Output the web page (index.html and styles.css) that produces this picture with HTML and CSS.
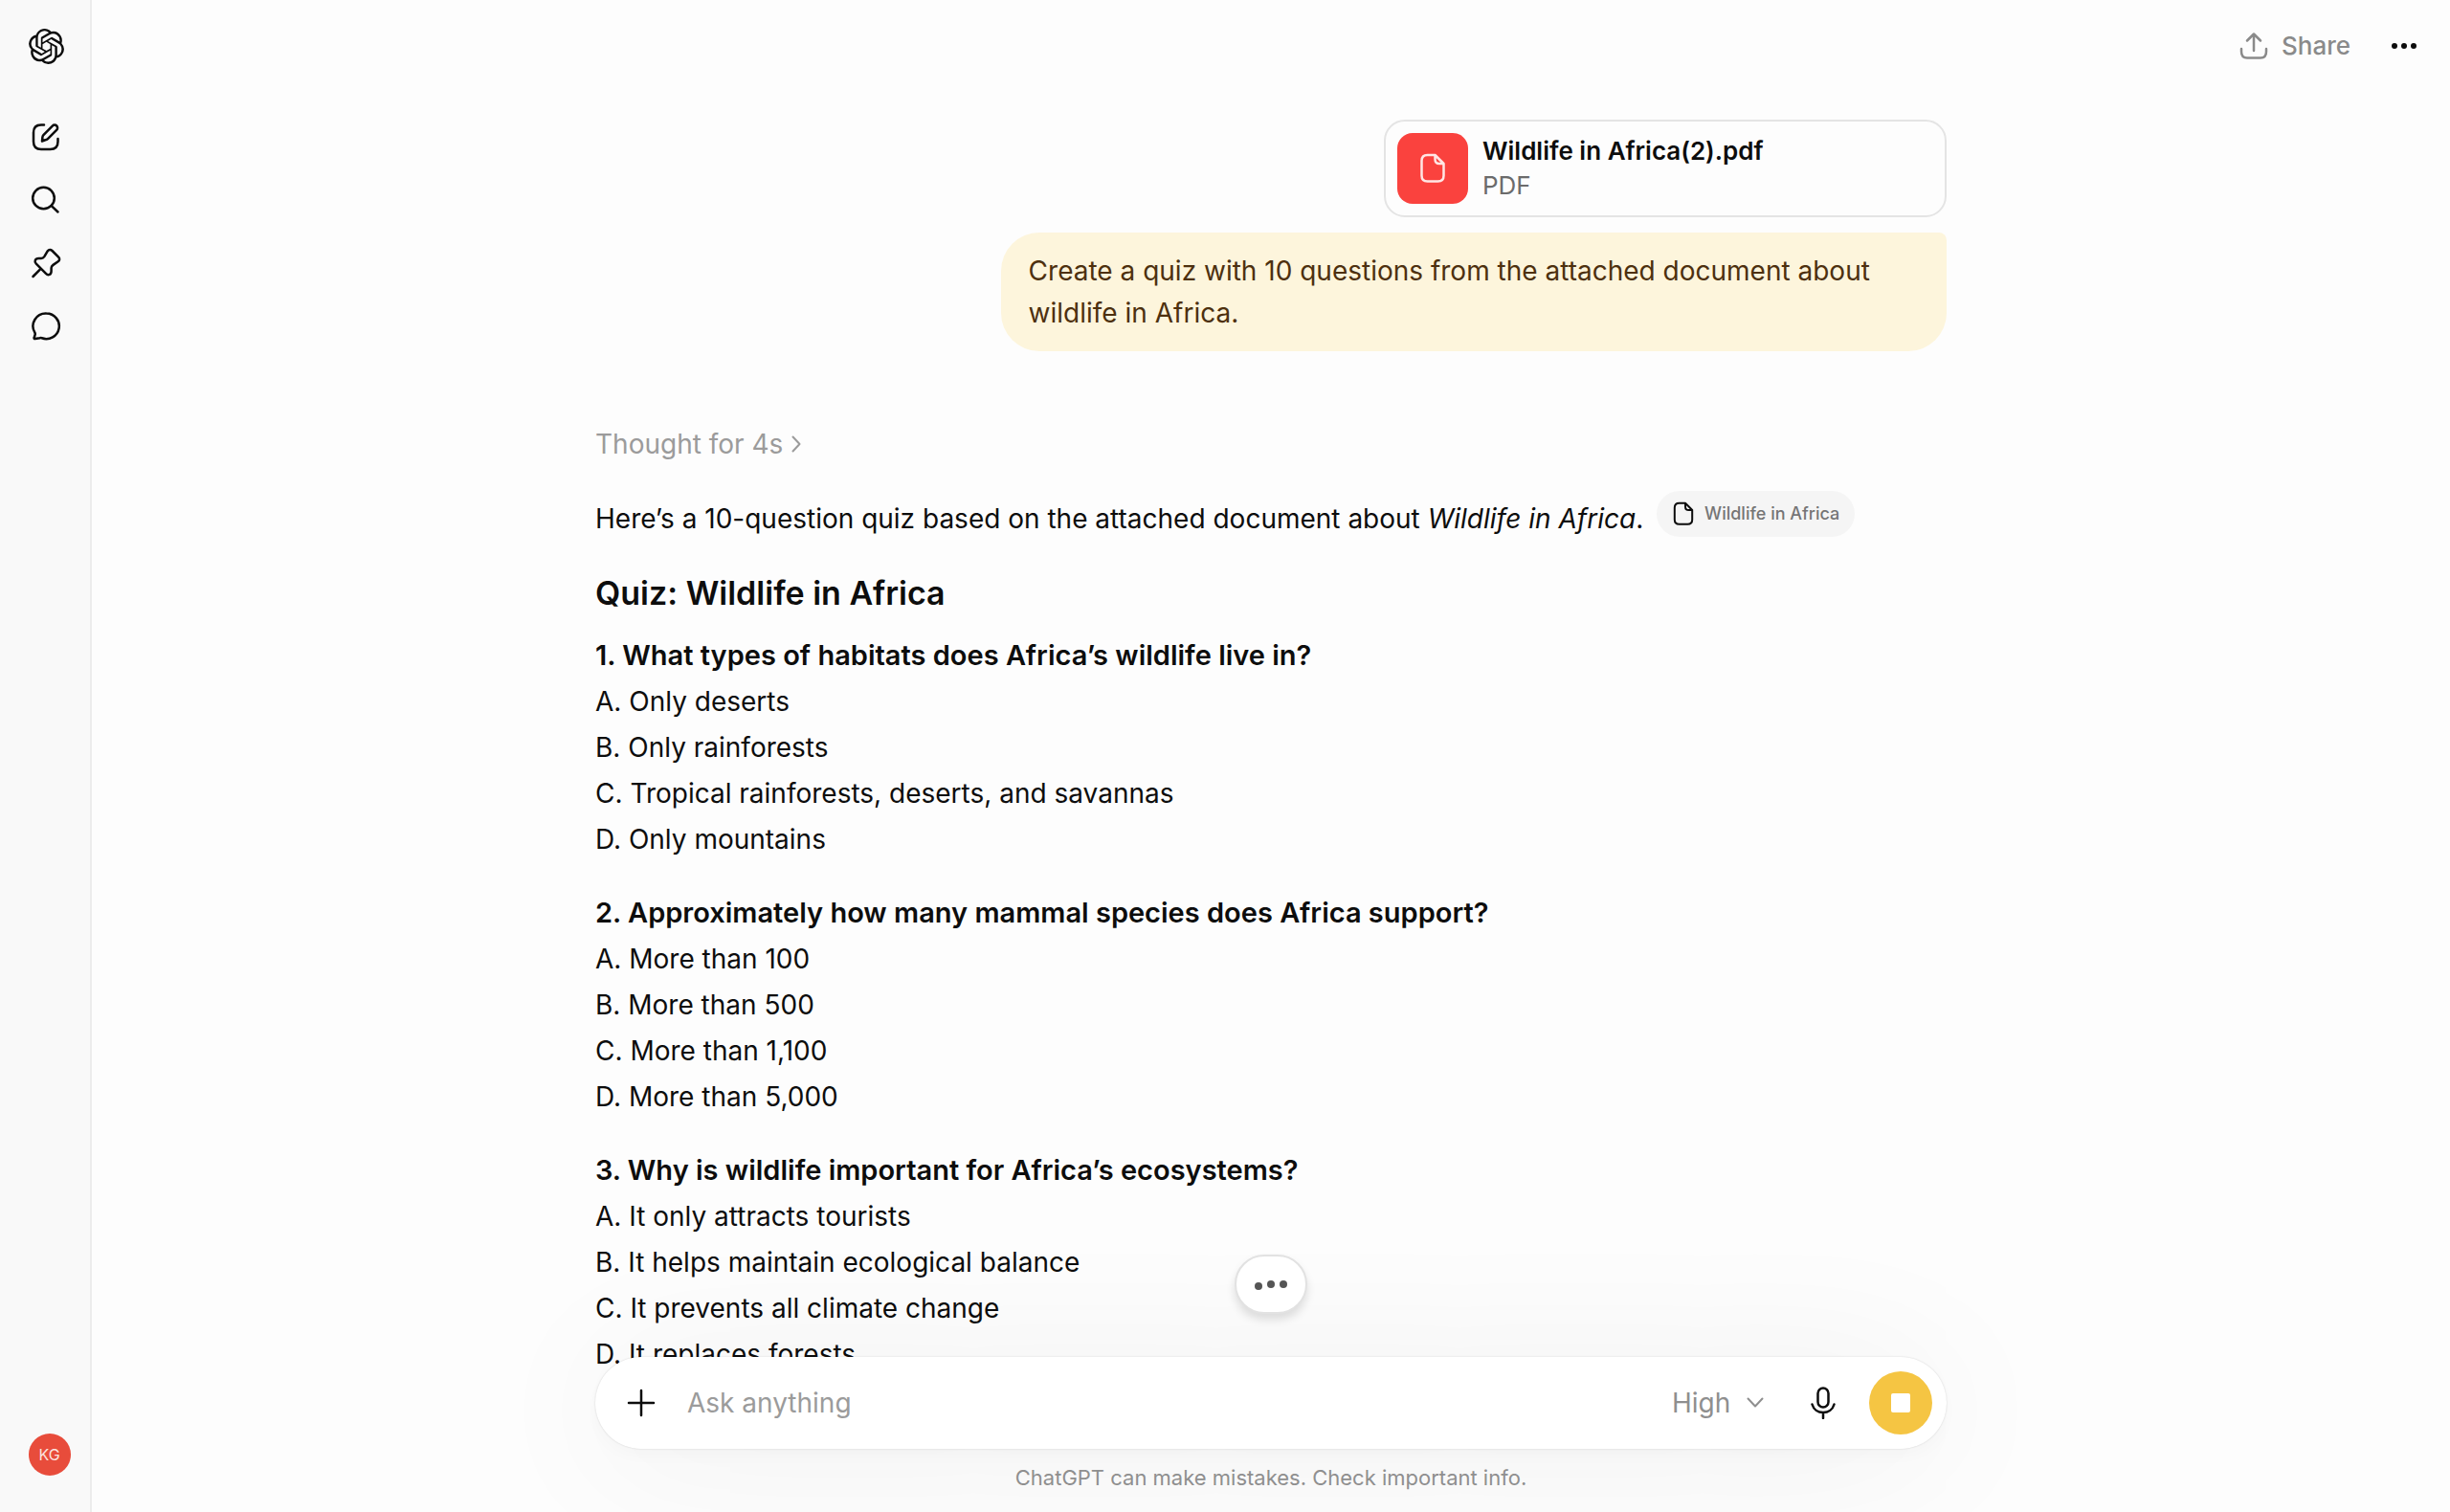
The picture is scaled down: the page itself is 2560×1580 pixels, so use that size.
FILE: index.html
```html
<!DOCTYPE html>
<html lang="en">
<head>
    <meta charset="UTF-8">
    <meta name="viewport" content="width=device-width, initial-scale=1.0">
    <title>ChatGPT</title>
    <link rel="stylesheet" href="styles.css">
</head>
<body>
    <!-- Sidebar -->
    <nav class="sidebar">
        <a href="#" class="logo" aria-label="Home">
            <svg viewBox="0 0 24 24" width="37" height="37" fill="currentColor"><path d="M22.2819 9.8211a5.9847 5.9847 0 0 0-.5157-4.9108 6.0462 6.0462 0 0 0-6.5098-2.9A6.0651 6.0651 0 0 0 4.9807 4.1818a5.9847 5.9847 0 0 0-3.9977 2.9 6.0462 6.0462 0 0 0 .7427 7.0966 5.98 5.98 0 0 0 .511 4.9107 6.051 6.051 0 0 0 6.5146 2.9001A5.9847 5.9847 0 0 0 13.2599 24a6.0557 6.0557 0 0 0 5.7718-4.2058 5.9894 5.9894 0 0 0 3.9977-2.9001 6.0557 6.0557 0 0 0-.7475-7.0729zm-9.022 12.6081a4.4755 4.4755 0 0 1-2.8764-1.0408l.1419-.0804 4.7783-2.7582a.7948.7948 0 0 0 .3927-.6813v-6.7369l2.02 1.1686a.071.071 0 0 1 .038.052v5.5826a4.504 4.504 0 0 1-4.4945 4.4944zm-9.6607-4.1254a4.4708 4.4708 0 0 1-.5346-3.0137l.142.0852 4.783 2.7582a.7712.7712 0 0 0 .7806 0l5.8428-3.3685v2.3324a.0804.0804 0 0 1-.0332.0615L9.74 19.9502a4.4992 4.4992 0 0 1-6.1408-1.6464zM2.3408 7.8956a4.485 4.485 0 0 1 2.3655-1.9728V11.6a.7664.7664 0 0 0 .3879.6765l5.8144 3.3543-2.0201 1.1685a.0757.0757 0 0 1-.071 0l-4.8303-2.7865A4.504 4.504 0 0 1 2.3408 7.872zm16.5963 3.8558L13.1038 8.364 15.1192 7.2a.0757.0757 0 0 1 .071 0l4.8303 2.7913a4.4944 4.4944 0 0 1-.6765 8.1042v-5.6772a.79.79 0 0 0-.407-.667zm2.0107-3.0231l-.142-.0852-4.7735-2.7818a.7759.7759 0 0 0-.7854 0L9.409 9.2297V6.8974a.0662.0662 0 0 1 .0284-.0615l4.8303-2.7866a4.4992 4.4992 0 0 1 6.6802 4.66zM8.3065 12.863l-2.02-1.1638a.0804.0804 0 0 1-.038-.0567V6.0742a4.4992 4.4992 0 0 1 7.3757-3.4537l-.142.0805L8.704 5.459a.7948.7948 0 0 0-.3927.6813zm1.0976-2.3654l2.602-1.4998 2.6069 1.4998v2.9994l-2.5974 1.4997-2.6067-1.4997Z"/></svg>
        </a>
        <button class="icon-btn" aria-label="New chat">
            <svg class="icon" viewBox="0 0 34 34"><path d="M15 4.500h-3c-5.500 0-8 2.500-8 8v9.500c0 5.500 2.500 8 8 8h9.500c5.500 0 8-2.500 8-8v-3"/><path d="M13 21.500l.4-4.200c.1-1 .5-1.800 1.200-2.500l9.200-9.200c1.300-1.300 3.200-1.300 4.400-.1 1.200 1.200 1.200 3.100-.1 4.400l-9.200 9.200c-.7.700-1.500 1.100-2.500 1.200z"/></svg>
        </button>
        <button class="icon-btn" aria-label="Search">
            <svg class="icon" viewBox="0 0 34 34"><circle cx="14.500" cy="15" r="11.300"/><path d="M22.800 23.200l6.700 6.300"/></svg>
        </button>
        <button class="icon-btn" aria-label="Pinned">
            <svg class="icon" viewBox="0 0 34 34"><path d="M3.500 31l7.800-7.800"/><path d="M18.700 4.300c1.500-1.700 3.300-1.700 4.800-.3l6.600 6.600c1.500 1.500 1.300 3.400-.4 4.700l-5.200 3.600c-1.300.9-1.900 1.600-1.900 3.100v3.200c0 4-3.300 5-5.600 2.700L6.800 17.700c-2.300-2.300-1.200-5.600 2.700-5.700l2.600-.1c1.500 0 2.400-.6 3.200-1.800z"/></svg>
        </button>
        <button class="icon-btn" aria-label="Chats">
            <svg class="icon" viewBox="0 0 34 34"><path d="M17.500 3.500a13.500 13.300 0 1 1-4.800 25.800c-.8-.3-1.300-.3-2.200-.1l-4.800.9c-.9.100-1.300-.5-1-1.300l.9-2.900c.3-.9.200-1.500-.2-2.300A13.500 13.300 0 0 1 17.500 3.500z"/></svg>
        </button>
        <button class="avatar">KG</button>
    </nav>

    <main>
        <header class="topbar">
            <button class="share">
                <svg class="icon" viewBox="0 0 30 30" width="30" height="30"><path d="M15 20V3M8 9.500L15 2.500l7 7M2 18v3c0 4 2 6.500 6 6.500h14c4 0 6-2.500 6-6.500v-3"/></svg>
                Share
            </button>
            <button class="more" aria-label="More">
                <svg viewBox="0 0 28 8" width="28" height="8" fill="currentColor"><circle cx="4" cy="4" r="3"/><circle cx="14" cy="4" r="3"/><circle cx="24" cy="4" r="3"/></svg>
            </button>
        </header>

        <div class="thread">
            <!-- User message -->
            <section class="user">
                <div class="file-card">
                    <div class="file-icon">
                        <svg class="icon" viewBox="0 0 30 32" width="30" height="32"><path d="M17.500 2H9.500C5.500 2 3.500 4 3.500 8v15.500c0 4 2 6 6 6h11c4 0 6-2 6-6V11zM17.500 2v4.500c0 3 1.500 4.500 4.500 4.500h4.500"/></svg>
                    </div>
                    <div class="file-text">
                        <div class="file-name">Wildlife in Africa(2).pdf</div>
                        <div class="file-type">PDF</div>
                    </div>
                </div>
                <div class="bubble">Create a quiz with 10 questions from the attached document about wildlife in Africa.</div>
            </section>

            <!-- Answer -->
            <article class="answer">
                <button class="thought">
                    Thought for 4s
                    <svg class="icon thin" viewBox="0 0 12 20" width="12" height="20"><path d="M2.500 2.500L9.500 10l-7 7.500"/></svg>
                </button>
                <p>Here’s a 10-question quiz based on the attached document about <em>Wildlife in Africa</em>.
                    <a href="#" class="chip"><svg class="icon" viewBox="0 0 30 32" width="24" height="26"><path d="M17.500 2H9.500C5.500 2 3.500 4 3.500 8v15.500c0 4 2 6 6 6h11c4 0 6-2 6-6V11zM17.500 2v4.500c0 3 1.500 4.500 4.500 4.500h4.500"/></svg>Wildlife in Africa</a></p>
                <h2>Quiz: Wildlife in Africa</h2>
                <p><strong>1. What types of habitats does Africa’s wildlife live in?</strong><br>
                    A. Only deserts<br>
                    B. Only rainforests<br>
                    C. Tropical rainforests, deserts, and savannas<br>
                    D. Only mountains</p>
                <p><strong>2. Approximately how many mammal species does Africa support?</strong><br>
                    A. More than 100<br>
                    B. More than 500<br>
                    C. More than 1,100<br>
                    D. More than 5,000</p>
                <p><strong>3. Why is wildlife important for Africa’s ecosystems?</strong><br>
                    A. It only attracts tourists<br>
                    B. It helps maintain ecological balance<br>
                    C. It prevents all climate change<br>
                    D. It replaces forests</p>
            </article>
        </div>

        <!-- Composer floats over the thread -->
        <footer class="dock">
            <button class="jump" aria-label="Still writing">
                <svg viewBox="0 0 36 14" width="36" height="14" fill="currentColor"><circle cx="5" cy="9" r="4"/><circle cx="18" cy="7" r="4"/><circle cx="31" cy="7" r="4"/></svg>
            </button>
            <form class="composer">
                <button type="button" class="tool" aria-label="Add">
                    <svg class="icon" viewBox="0 0 34 34"><path d="M17 4v26M4 17h26"/></svg>
                </button>
                <input type="text" placeholder="Ask anything" aria-label="Message">
                <label class="effort">
                    <select aria-label="Effort">
                        <option>High</option>
                    </select>
                    <svg class="icon thin" viewBox="0 0 20 14" width="20" height="14"><path d="M2.500 2.500L10 10.500l7.500-8"/></svg>
                </label>
                <button type="button" class="tool" aria-label="Dictate">
                    <svg class="icon" viewBox="0 0 34 34"><rect x="11.500" y="1.500" width="11" height="20" rx="5.500"/><path d="M5.500 18.500c1.500 5.200 6 8.500 11.500 8.500s10-3.300 11.500-8.500M17 27v6"/></svg>
                </button>
                <button type="button" class="stop" aria-label="Stop"><span></span></button>
            </form>
            <p class="note">ChatGPT can make mistakes. Check important info.</p>
        </footer>
    </main>
</body>
</html>
```
FILE: styles.css
```css
* {
    box-sizing: border-box;
}

body {
    margin: 0;
    height: 100vh;
    display: flex;
    overflow: hidden;
    background: #fdfdfd;
    color: #0d0d0d;
    font-family: Inter, "Liberation Sans", sans-serif;
    font-size: 28px;
    line-height: 48px;
}

button, input, select {
    font: inherit;
    color: inherit;
    background: none;
    border: 0;
    padding: 0;
    margin: 0;
}

svg {
    display: block;
    flex: none;
}

.icon {
    fill: none;
    stroke: currentColor;
    stroke-width: 2.5;
    stroke-linecap: round;
    stroke-linejoin: round;
}

.thin {
    stroke-width: 2;
}

/* Sidebar */
.sidebar {
    flex: none;
    width: 96px;
    padding: 30px 0 38px 2px;
    display: flex;
    flex-direction: column;
    align-items: center;
    background: #f9f9f9;
    border-right: 2px solid #ececec;
}

.logo {
    color: inherit;
    margin-bottom: 43px;
}

.icon-btn {
    width: 66px;
    height: 66px;
    display: grid;
    place-items: center;
}

.icon-btn svg, .tool svg {
    width: 34px;
    height: 34px;
}

.avatar {
    width: 44px;
    height: 44px;
    margin-top: auto;
    margin-left: 7px;
    border-radius: 50%;
    background: #e84c3b;
    color: #fbe3df;
    font-size: 16px;
    line-height: 44px;
}

/* Main column */
main {
    flex: 1;
    position: relative;
    overflow: hidden;
}

.topbar {
    height: 96px;
    padding: 0 34px;
    display: flex;
    align-items: center;
    justify-content: flex-end;
    gap: 42px;
}

.share {
    display: flex;
    align-items: center;
    gap: 14px;
    color: #8a8a8a;
    font-size: 26px;
    font-weight: 500;
}

.thread {
    max-width: 1412px;
    margin: 0 auto;
    padding-top: 29px;
}

.user {
    display: flex;
    flex-direction: column;
    align-items: flex-end;
    gap: 16px;
}

.file-card {
    width: 588px;
    padding: 12px;
    display: flex;
    align-items: center;
    gap: 15px;
    border: 2px solid #e4e4e4;
    border-radius: 22px;
    font-size: 26px;
    line-height: 36px;
}

.file-icon {
    width: 74px;
    height: 74px;
    display: grid;
    place-items: center;
    border-radius: 16px;
    background: #fa423e;
    color: #ffe6e4;
}

.file-name {
    font-weight: 600;
}

.file-type {
    color: #6b6b6b;
}

.bubble {
    max-width: 70%;
    padding: 18px 29px;
    border-radius: 40px 8px 40px 40px;
    background: #fdf5dc;
    color: #4d300f;
    line-height: 44px;
}

.answer {
    margin-top: 73px;
}

.thought {
    display: flex;
    align-items: center;
    gap: 8px;
    color: #9b9b9b;
}

.answer p {
    margin: 0 0 29px;
}

.answer .thought + p {
    margin: 25px 0 30px;
}

h2 {
    margin: 0 0 17px;
    font-size: 34px;
    line-height: 48px;
    font-weight: 600;
}

strong {
    font-size: 29px;
    font-weight: 600;
}

.chip {
    display: inline-flex;
    align-items: center;
    gap: 10px;
    height: 48px;
    margin-left: 6px;
    padding: 0 16px;
    border-radius: 24px;
    vertical-align: 2px;
    background: #f5f5f5;
    color: #757575;
    font-size: 18px;
    font-weight: 500;
    text-decoration: none;
}

.chip svg {
    color: #0d0d0d;
}

/* Composer */
.dock {
    position: absolute;
    left: 0;
    right: 0;
    bottom: 0;
    display: flex;
    flex-direction: column;
    align-items: center;
}

.jump {
    position: relative;
    width: 76px;
    height: 62px;
    margin-bottom: 45px;
    display: grid;
    place-items: center;
    border: 2px solid #e2e2e2;
    border-radius: 31px;
    background: #fff;
    color: #555;
    box-shadow: 0 6px 10px rgba(0, 0, 0, 0.12);
    z-index: 1;
}

.composer {
    width: 100%;
    max-width: 1412px;
    height: 96px;
    padding: 0 15px 0 31px;
    display: flex;
    align-items: center;
    border-radius: 48px;
    background: #fff;
    box-shadow: 0 0 2px rgba(0, 0, 0, 0.16), 0 8px 16px rgba(0, 0, 0, 0.02), 0 8px 160px rgba(0, 0, 0, 0.06);
}

.composer input {
    flex: 1;
    min-width: 0;
    margin-left: 31px;
    outline: none;
}

.composer input::placeholder {
    color: #9b9b9b;
    opacity: 1;
}

.effort {
    display: flex;
    align-items: center;
    gap: 15px;
    margin-right: 44px;
    color: #8f8f8f;
}

.effort select {
    appearance: none;
    outline: none;
}

.stop {
    width: 66px;
    height: 66px;
    margin-left: 31px;
    display: grid;
    place-items: center;
    border-radius: 50%;
    background: #f5c543;
}

.stop span {
    width: 20px;
    height: 20px;
    border-radius: 2px;
    background: #fff;
}

.note {
    margin: 14px 0 20px;
    color: #8f8f8f;
    font-size: 22px;
    line-height: 32px;
}
```
